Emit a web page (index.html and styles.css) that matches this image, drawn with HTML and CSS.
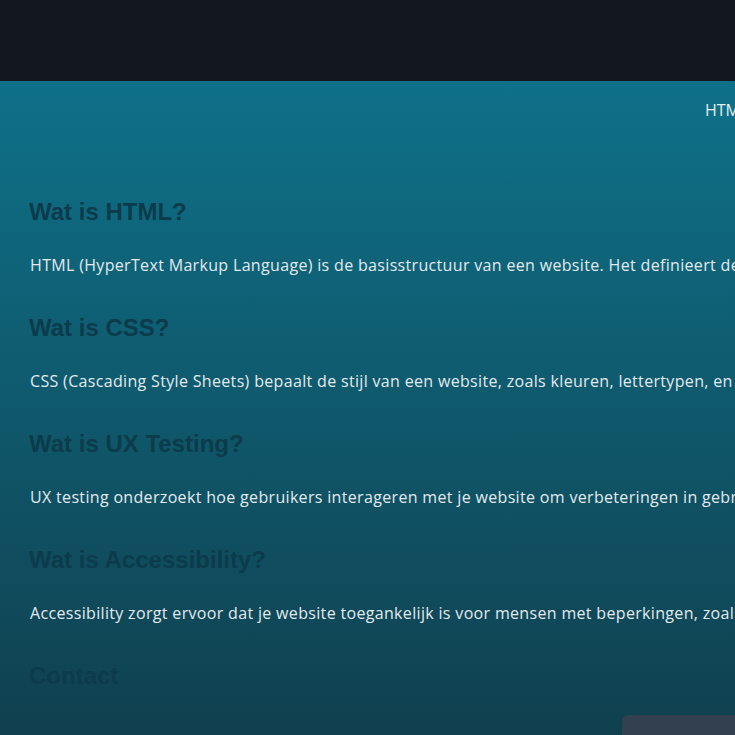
FILE: index.html
```html
<!DOCTYPE html>
<html lang="nl">
<head>
<meta charset="utf-8">
<title>Webdesign</title>
<link rel="stylesheet" href="styles.css">
</head>
<body>
<header class="topbar"></header>
<main class="main">
  <nav class="nav"><a href="#html">HTML</a><a href="#css">CSS</a><a href="#ux">UX Testing</a></nav>
  <section class="block"><h2 class="title">Wat is HTML?</h2><p class="text">HTML (HyperText Markup Language) is de basisstructuur van een website. Het definieert de inhoud en opbouw van pagina's.</p></section>
  <section class="block"><h2 class="title">Wat is CSS?</h2><p class="text">CSS (Cascading Style Sheets) bepaalt de stijl van een website, zoals kleuren, lettertypen, en layout.</p></section>
  <section class="block"><h2 class="title">Wat is UX Testing?</h2><p class="text">UX testing onderzoekt hoe gebruikers interageren met je website om verbeteringen in gebruiksvriendelijkheid te vinden.</p></section>
  <section class="block"><h2 class="title">Wat is Accessibility?</h2><p class="text">Accessibility zorgt ervoor dat je website toegankelijk is voor mensen met beperkingen, zoals slechtziendheid.</p></section>
  <section class="block contact"><h2 class="title">Contact</h2><div class="form-wrap"><div class="form"></div></div></section>
</main>
</body>
</html>
```
FILE: styles.css
```css
html, body { margin: 0; padding: 0; overflow: hidden; }
body { width: 735px; height: 735px; background: #10404f; font-family: "Open Sans", sans-serif; }
.topbar { height: 81px; background: #13171f; }
.main { height: 654px; background: linear-gradient(to bottom, #0e7189 0%, #10404f 100%); padding: 19px 0 0 30px; box-sizing: border-box; overflow: hidden; }
.nav { display: flex; gap: 24px; padding-left: 675px; height: 20px; white-space: nowrap; margin-bottom: 78px; }
.nav a { color: #e6edf0; text-decoration: none; font-size: 16px; line-height: 20px; }
.block { margin: 0; }
.title { margin: 0 0 0 -1px; font-family: "Liberation Sans", Arial, sans-serif; font-size: 24px; line-height: 28px; font-weight: bold; color: #0c3b4b; }
.text { margin: 29px 0 39px; font-size: 16px; line-height: 20px; color: #e2eaee; white-space: nowrap; letter-spacing: 0.33px; }
.form-wrap { display: flex; padding: 25px 0 0 592px; }
.form { width: 200px; height: 60px; border-radius: 6px; background: #334050; flex: none; }
```
